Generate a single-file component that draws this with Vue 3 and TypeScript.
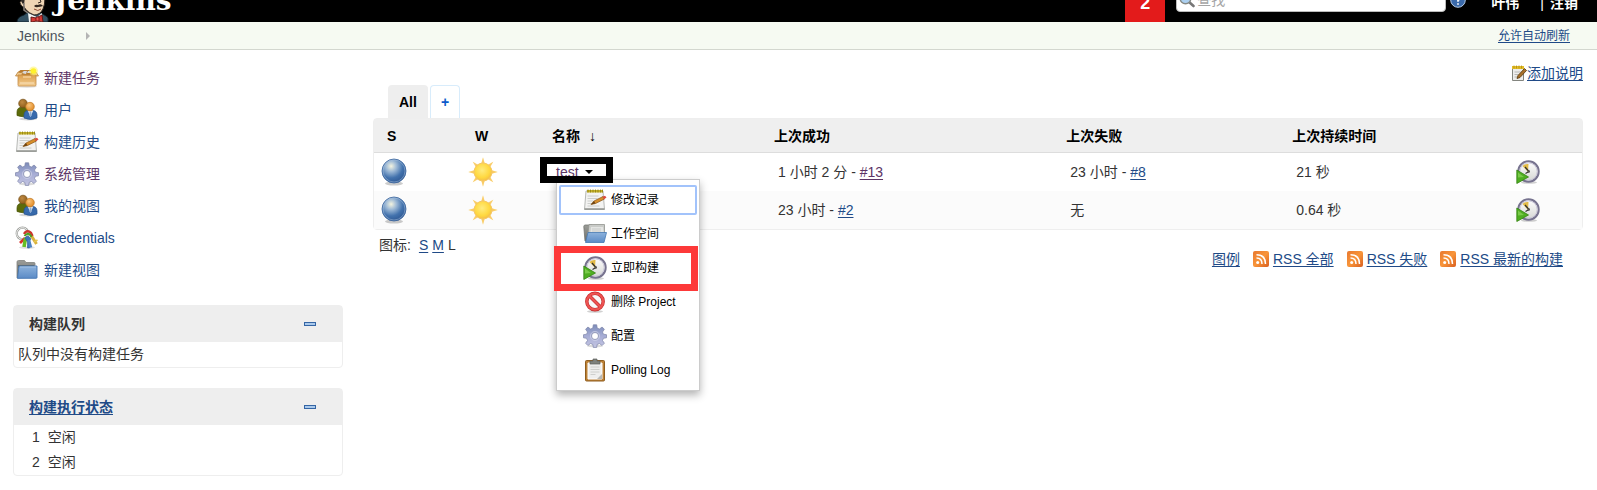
<script setup lang="ts">
import { ref } from 'vue'

interface Task { icon: string; label: string; visited?: boolean }
interface Build { age: string; id?: string; visited?: boolean }
interface Job { name: string; success: Build; failure: Build; duration: string; open?: boolean }

const query = ref('')

const tasks: Task[] = [
  { icon: 'package', label: '新建任务', visited: true },
  { icon: 'users', label: '用户' },
  { icon: 'notepad', label: '构建历史' },
  { icon: 'gear', label: '系统管理', visited: true },
  { icon: 'users', label: '我的视图' },
  { icon: 'keys', label: 'Credentials' },
  { icon: 'folder', label: '新建视图' },
]

const executors: string[] = ['空闲', '空闲']

const jobs: Job[] = [
  { name: 'test', success: { age: '1 小时 2 分', id: '#13', visited: true }, failure: { age: '23 小时', id: '#8' }, duration: '21 秒', open: true },
  { name: '', success: { age: '23 小时', id: '#2' }, failure: { age: '无' }, duration: '0.64 秒' },
]

const menu: Task[] = [
  { icon: 'notepad', label: '修改记录' },
  { icon: 'folder-open', label: '工作空间' },
  { icon: 'clock', label: '立即构建' },
  { icon: 'forbidden', label: '删除 Project' },
  { icon: 'gear', label: '配置' },
  { icon: 'clipboard', label: 'Polling Log' },
]

const feeds: string[] = ['RSS 全部', 'RSS 失败', 'RSS 最新的构建']
</script>

<template>
  <div class="page">
    <svg class="sprite" aria-hidden="true">
      <defs>
        <radialGradient id="gBall" cx=".38" cy=".3" r=".75">
          <stop offset="0" stop-color="#f4f4e0" /><stop offset=".3" stop-color="#9db9d6" />
          <stop offset=".65" stop-color="#4272ad" /><stop offset="1" stop-color="#2c5590" />
        </radialGradient>
        <radialGradient id="gSun" cx=".45" cy=".4" r=".6">
          <stop offset="0" stop-color="#ffec80" /><stop offset=".7" stop-color="#ffd83f" /><stop offset="1" stop-color="#f3bd4b" />
        </radialGradient>
        <linearGradient id="gGear" x1="0" y1="0" x2="0" y2="1">
          <stop offset="0" stop-color="#7d8dba" /><stop offset=".5" stop-color="#a7add5" /><stop offset="1" stop-color="#c4c5e2" />
        </linearGradient>
        <linearGradient id="gBlue" x1="0" y1="0" x2="0" y2="1">
          <stop offset="0" stop-color="#8db2dc" /><stop offset="1" stop-color="#5b8bc6" />
        </linearGradient>
        <linearGradient id="gGray" x1="0" y1="0" x2="0" y2="1">
          <stop offset="0" stop-color="#9b9c98" /><stop offset="1" stop-color="#6d6f6b" />
        </linearGradient>
        <linearGradient id="gBox" x1="0" y1="0" x2="0" y2="1">
          <stop offset="0" stop-color="#dc9f4c" /><stop offset="1" stop-color="#f3ce94" />
        </linearGradient>
        <linearGradient id="gRss" x1="0" y1="0" x2="1" y2="1">
          <stop offset="0" stop-color="#e8782f" /><stop offset=".5" stop-color="#f8953a" /><stop offset="1" stop-color="#d95f20" />
        </linearGradient>
        <radialGradient id="gBrown" cx=".4" cy=".35" r=".7">
          <stop offset="0" stop-color="#c08a43" /><stop offset="1" stop-color="#8a5a17" />
        </radialGradient>
        <radialGradient id="gOrange" cx=".4" cy=".35" r=".7">
          <stop offset="0" stop-color="#f9c57c" /><stop offset="1" stop-color="#df8620" />
        </radialGradient>
        <linearGradient id="gFace" x1="0" y1="0" x2="0" y2="1">
          <stop offset="0" stop-color="#fff" /><stop offset="1" stop-color="#d5d6d3" />
        </linearGradient>
      </defs>
      <symbol id="i-package" viewBox="0 0 24 24">
        <ellipse cx="12" cy="20.5" rx="10" ry="1.5" fill="#000" opacity=".1" />
        <path d="M3 6 5.500 4h13L21 6v4H3z" fill="#b87c30" />
        <path d="M6 7l3-2h3l-1 3zM12 7l1-2h3l1 2z" fill="#d8d9dc" />
        <path d="M3 6 0.500 10H6l2-3zM21 6l2.500 4H18l-2-3z" fill="#efc88b" stroke="#b57a32" stroke-width=".7" />
        <path d="M3 9h18v10q0 1-1 1H4q-1 0-1-1z" fill="url(#gBox)" stroke="#c48b44" stroke-width=".8" />
        <path d="M5 17h14" stroke="#fae3bd" /><path d="M8 11h8" stroke="#f4cf98" stroke-width="1.500" />
        <circle cx="18.500" cy="5" r="4.500" fill="#fff36a" opacity=".55" /><circle cx="18.500" cy="5" r="2.800" fill="#fff12c" />
      </symbol>
      <symbol id="i-users" viewBox="0 0 24 24">
        <ellipse cx="13" cy="21" rx="9" ry="1.500" fill="#000" opacity=".16" />
        <path d="M2 17.500V14q0-5 6-5t6 5v3.500q-6 2.500-12 0z" fill="#5c6b0a" stroke="#465204" stroke-width=".7" />
        <circle cx="8" cy="5.500" r="4.300" fill="url(#gBrown)" stroke="#765019" stroke-width=".7" />
        <path d="M9 20v-3q0-5 6.500-5t6.500 5v3q-6.500 3-13 0z" fill="#376aac" stroke="#28548f" stroke-width=".7" />
        <path d="M12.800 12.500h5.400L15.500 19z" fill="#edf2f7" /><path d="M14.700 13.500h1.600l.4 4-1.200 1.500-1.200-1.500z" fill="#8eacd0" />
        <circle cx="15" cy="8.600" r="4.300" fill="url(#gOrange)" stroke="#bf7824" stroke-width=".7" />
      </symbol>
      <symbol id="i-notepad" viewBox="0 0 24 24">
        <path d="M3 3h17l1.500 18.500H1.500z" fill="#f3f3f2" stroke="#a6a8a4" stroke-width=".8" />
        <path d="M1.500 21h20" stroke="#92948f" stroke-width="1.500" />
        <path d="M4 2h16v2.500H4z" fill="#c6b42c" /><path d="M5 1.500v3M7.500 1.500v3M10 1.500v3M12.500 1.500v3M15 1.500v3M17.500 1.500v3M19.500 1.500v3" stroke="#8d7b13" stroke-width=".8" />
        <path d="M4.500 8h11M4.500 10.500h10M4.500 13h6M4.500 15.500h5M4.500 18h12" stroke="#c2c4c1" stroke-width=".8" />
        <path d="M8 16.500l3-3.500 9-4.500 1.500 2.500-9 4.500z" fill="#d78e2b" stroke="#87571b" stroke-width=".7" />
        <path d="M8 16.500l3-3.500 1.500 2.500z" fill="#6d4415" /><path d="M19.500 8.800l2.500-1 1.500 1.700-2.500 1.700z" fill="#dc4a40" />
      </symbol>
      <symbol id="i-gear" viewBox="0 0 24 24">
        <ellipse cx="12" cy="22" rx="8" ry="1.500" fill="#000" opacity=".14" />
        <g fill="url(#gGear)" stroke="#7d84a8" stroke-width=".7">
          <path fill-rule="evenodd" d="M10.300.8h3.400l.5 3.300 2.200.9 2.700-2 2.300 2.300-1.900 2.700.9 2.200 3.100.5v3.100l-3.100.5-.9 2.200 1.900 2.700-2.300 2.300-2.700-2-2.200.9-.5 3h-3.400l-.5-3-2.200-.9-2.700 2-2.300-2.300 1.900-2.700-.9-2.200L.5 13.800v-3.100l3.100-.5.9-2.200-1.900-2.700L4.900 3l2.700 2 2.200-.9zM12 8.500a3.500 3.500 0 1 0 0 7 3.500 3.500 0 0 0 0-7z" />
        </g>
        <circle cx="12" cy="12" r="4.600" fill="none" stroke="#d5d8ec" stroke-width=".6" />
      </symbol>
      <symbol id="i-keys" viewBox="0 0 24 24">
        <ellipse cx="12" cy="21.500" rx="8" ry="1.300" fill="#000" opacity=".12" />
        <circle cx="7.500" cy="7.500" r="5.800" fill="none" stroke="#9c9e9a" stroke-width="2.200" /><circle cx="7.500" cy="7.500" r="5.800" fill="none" stroke="#f2f2f1" />
        <path d="M16.500 10l5 8" stroke="#d9b23c" stroke-width="3" /><path d="M19 16l3.500-2" stroke="#e7c64f" stroke-width="1.500" />
        <path d="M10 12l-5 5" stroke="#d93329" stroke-width="2.600" />
        <path d="M10.500 12l-1.500 9" stroke="#67bd23" stroke-width="3.600" />
        <path d="M9 8q3-5 7-1l1.500 3" fill="none" stroke="#cc372d" stroke-width="2.500" />
        <path d="M9.500 10q4-5 7 1" fill="none" stroke="#4da11f" stroke-width="2" />
        <path d="M10 12q3-4 6 1l-1.500 2v7h-2v-6z" fill="#3e75b8" stroke="#255797" stroke-width=".6" /><path d="M14 14l2 7.500" stroke="#4b82c4" stroke-width="2.500" />
      </symbol>
      <symbol id="i-folder" viewBox="0 0 24 24">
        <path d="M2 20V4q0-1.500 1.500-1.500h6L11 4.500h8q1 0 1 1V19z" fill="url(#gGray)" stroke="#80827e" stroke-width=".8" />
        <path d="M3 7h16v3H3z" fill="#666964" />
        <path d="M4 8H22v11.500q0 .8-.8.800H2.500z" fill="url(#gBlue)" stroke="#4577b3" stroke-width=".9" />
        <path d="M5 9h16" stroke="#a9c6e6" stroke-width=".8" />
      </symbol>
      <symbol id="i-folder-open" viewBox="0 0 24 24">
        <path d="M2 19 .800 4.500q0-1.500 1.500-1.500H9l1 2h10v13z" fill="url(#gGray)" stroke="#727470" stroke-width=".8" />
        <path d="M4.500 16 6 2.500h15.500V13z" fill="#c9cbc8" stroke="#92948f" stroke-width=".8" /><path d="M7 15l1-10h12l1 9z" fill="#e4e5e3" /><path d="M9 7h9M9 9h9" stroke="#bfc0bd" stroke-width=".7" />
        <path d="M5 10.500h18.500L21 20.500H2.500z" fill="url(#gBlue)" stroke="#4578b3" stroke-width=".8" />
      </symbol>
      <symbol id="i-clock" viewBox="0 0 24 24">
        <ellipse cx="13" cy="22.500" rx="8" ry="1.300" fill="#000" opacity=".18" />
        <circle cx="12.500" cy="11.500" r="10.200" fill="url(#gFace)" stroke="#77738f" stroke-width="2" />
        <circle cx="12.500" cy="11.500" r="8.700" fill="none" stroke="#c7c4d7" />
        <path d="M12 12L6.500 6Q9 3.500 12.500 4z" fill="#e3bb46" />
        <path d="M9 7l4 4.500M9.500 13.500l3.500-2" stroke="#31312f" stroke-width="1.200" /><circle cx="12.800" cy="11.500" r="1.200" fill="#55534d" />
        <path d="M.800 10v13.500L12.500 17z" fill="#4fae21" stroke="#338411" stroke-width=".8" /><path d="M2 12.500v5l6-.5z" fill="#8dd65c" opacity=".7" />
      </symbol>
      <symbol id="i-forbidden" viewBox="0 0 24 24">
        <ellipse cx="12" cy="21.500" rx="8" ry="1.300" fill="#000" opacity=".18" />
        <circle cx="12" cy="11.500" r="8.200" fill="#f8f8f8" stroke="#c32a2b" stroke-width="3.400" /><path d="M6.500 6l11 11" stroke="#c32a2b" stroke-width="3.400" />
        <circle cx="12" cy="11.500" r="8.200" fill="none" stroke="#ed5352" stroke-width="2.200" /><path d="M6.500 6l11 11" stroke="#ed5352" stroke-width="2.200" />
      </symbol>
      <symbol id="i-clipboard" viewBox="0 0 24 24">
        <rect x="2.500" y="2.500" width="19" height="20.500" rx="1" fill="#bc8136" stroke="#8f5d1e" />
        <path d="M5 5h14v16H5z" fill="#eeeeed" stroke="#fff" /><path d="M7.500 9h9M7.500 11.500h9M7.500 14h9M7.500 16.500h5" stroke="#c5c6c4" stroke-width=".8" />
        <path d="M14 21l5-5v5z" fill="#b7b8b6" /><path d="M7 3h3V1h4v2h3v3H7z" fill="#7f827d" stroke="#5d605b" stroke-width=".7" />
      </symbol>
      <symbol id="i-ball" viewBox="0 0 26 28">
        <ellipse cx="13" cy="25.500" rx="9" ry="2" fill="#000" opacity=".2" />
        <circle cx="13" cy="13" r="12" fill="url(#gBall)" stroke="#3c669d" stroke-width=".8" /><circle cx="13" cy="13" r="11" fill="none" stroke="#a9c2de" stroke-width=".7" opacity=".7" />
      </symbol>
      <symbol id="i-sun" viewBox="0 0 30 30">
        <path d="M15 0l2 7h-4zM15 30l2-7h-4zM0 15l7-2v4zM30 15l-7-2v4zM4.500 4.500l6.500 3.500-3 3zM25.500 4.500L22 11l-3-3zM4.500 25.500L8 19l3 3zM25.500 25.500L19 22l3-3z" fill="#fde6a0" opacity=".55" />
        <path d="M15 .5l1.700 6h-3.400zM15 29.500l1.700-6h-3.400zM.5 15l6-1.700v3.400zM29.500 15l-6-1.700v3.400zM4.800 4.800l5.700 3.400-2.300 2.300zM25.200 4.800l-3.400 5.700-2.300-2.300zM4.800 25.200l3.400-5.700 2.300 2.300zM25.200 25.200l-5.700-3.400 2.300-2.300z" fill="#f9cc68" />
        <circle cx="15" cy="15" r="9" fill="url(#gSun)" stroke="#f5c765" />
      </symbol>
      <symbol id="i-rss" viewBox="0 0 16 16">
        <rect width="16" height="16" rx="2" fill="url(#gRss)" />
        <circle cx="4.700" cy="11.500" r="1.500" fill="#fff" /><path d="M3.500 7q5.500 0 5.500 6M3.500 3.700q9 0 9 9.300" fill="none" stroke="#fff" stroke-width="1.500" />
      </symbol>
      <symbol id="i-edit" viewBox="0 0 16 16">
        <path d="M1.500 2.500h11v13h-11z" fill="#ededec" stroke="#83857f" /><path d="M1 1h12v3H1z" fill="#e4be29" /><path d="M3 .5v3M5.500.5v3M8 .5v3M10.500.5v3" stroke="#a88410" stroke-width=".7" />
        <path d="M3.500 7h6M3.500 9.500h4M3.500 12h3" stroke="#aaa" stroke-width=".8" /><path d="M6 13.500l1-3 6.500-7 2 2-6.500 7z" fill="#a9712a" stroke="#573609" stroke-width=".8" />
      </symbol>
      <symbol id="i-mag" viewBox="0 0 16 16">
        <path d="M9.500 9.500l5 4.500" stroke="#777" stroke-width="2.600" stroke-linecap="round" /><circle cx="6.500" cy="6.500" r="5.300" fill="#acd0f0" stroke="#858985" stroke-width="1.400" /><path d="M4 8q0-4 4-4" stroke="#e9f4ff" fill="none" stroke-width="1.500" />
      </symbol>
      <symbol id="i-help" viewBox="0 0 16 16">
        <circle cx="8" cy="8" r="7.300" fill="#3b6aaa" stroke="#b4cae5" /><path d="M5.700 6q0-2.500 2.500-2.500 2.200 0 2.200 2Q10.400 7 8 8.300v1.500M8 11.200v1.600" fill="none" stroke="#fff" stroke-width="1.700" />
      </symbol>
      <symbol id="i-butler" viewBox="0 0 34 44">
        <path d="M1 44q0-5 7-7l4-3 13 1 5 3q3 1 2 6z" fill="#335061" stroke="#0c1a22" stroke-width=".8" />
        <path d="M12 35l9 4 5-4v9H13z" fill="#f4f4f2" />
        <path d="M6 22Q3 7 16 5q14-1 13 14 0 8-2 12-3 6-9 6Q7 33 6 22z" fill="#efd5b5" stroke="#30251d" />
        <path d="M5 24Q1 4 16 3q10-1 13 8-8-5-15 0-2 7-5 8l-1 8q-2 0-3-3z" fill="#2f2925" />
        <path d="M5 23q-2 1 0 4t3 1" fill="#efd5b5" stroke="#30251d" stroke-width=".8" />
        <path d="M8 25v7l4 3" fill="none" stroke="#8e857e" stroke-width="1.500" />
        <path d="M17 18h3M24 18h3M23 19l2 5-3 1" stroke="#30251d" fill="none" />
        <path d="M18 28q2-2 4-1 3-2 5 1-3 1-5 1-2 1-4-1z" fill="#33271f" /><path d="M18 31q4 3 7 0" stroke="#8c4630" fill="none" />
        <path d="M15 39l5 1 6-3 1 7-6-1-6 1z" fill="#d33833" stroke="#5c1210" stroke-width=".9" /><path d="M20 39h3v4h-3z" fill="#ef4d48" stroke="#5c1210" stroke-width=".7" />
      </symbol>
    </svg>

    <header class="top">
      <div class="top-inner">
        <a href="#" class="brand"><svg class="butler"><use href="#i-butler" /></svg><span>Jenkins</span></a>
        <a href="#" class="alerts">2</a>
        <form class="search" @submit.prevent>
          <svg class="ic16"><use href="#i-mag" /></svg>
          <input v-model="query" type="text" placeholder="查找" aria-label="查找">
        </form>
        <a href="#" class="help" aria-label="?"><svg class="ic16"><use href="#i-help" /></svg></a>
        <nav class="login"><a href="#">叶伟</a><span class="bar">|</span><a href="#">注销</a></nav>
      </div>
    </header>

    <nav class="crumbs">
      <a href="#" class="crumb">Jenkins</a><span class="crumb-arrow"></span>
      <a href="#" class="refresh">允许自动刷新</a>
    </nav>

    <div class="body">
      <aside class="side">
        <nav class="tasks">
          <a v-for="t in tasks" :key="t.label" href="#" class="task" :class="{ visited: t.visited }">
            <svg class="ic24"><use :href="'#i-' + t.icon" /></svg><span>{{ t.label }}</span>
          </a>
        </nav>
        <section class="pane">
          <h2 class="pane-head"><span>构建队列</span><button type="button" class="collapse" aria-label="collapse"></button></h2>
          <p class="pane-empty">队列中没有构建任务</p>
        </section>
        <section class="pane">
          <h2 class="pane-head"><a href="#">构建执行状态</a><button type="button" class="collapse" aria-label="collapse"></button></h2>
          <table class="executors">
            <tbody><tr v-for="(state, i) in executors" :key="i"><td class="num">{{ i + 1 }}</td><td>{{ state }}</td></tr></tbody>
          </table>
        </section>
      </aside>

      <main class="main">
        <div class="describe"><a href="#"><svg class="ic16"><use href="#i-edit" /></svg><span class="u">添加说明</span></a></div>
        <nav class="tabs"><a href="#" class="tab active">All</a><a href="#" class="tab add">+</a></nav>
        <table class="jobs">
          <colgroup><col class="c-s"><col class="c-w"><col class="c-name"><col class="c-ok"><col class="c-bad"><col class="c-time"><col class="c-run"></colgroup>
          <thead>
            <tr><th>S</th><th>W</th><th>名称<span class="sort">↓</span></th><th>上次成功</th><th>上次失败</th><th>上次持续时间</th><th></th></tr>
          </thead>
          <tbody>
            <tr v-for="(job, i) in jobs" :key="i">
              <td class="status"><svg class="ball"><use href="#i-ball" /></svg></td>
              <td class="weather"><svg class="sun"><use href="#i-sun" /></svg></td>
              <td>
                <div v-if="job.open" class="job-link">
                  <a href="#" class="visited">{{ job.name }}</a><button type="button" class="caret" aria-label="menu"></button>
                  <div class="menu">
                    <a v-for="(m, k) in menu" :key="m.label" href="#" class="menu-item" :class="{ focused: k === 0, marked: k === 2 }">
                      <svg class="ic24"><use :href="'#i-' + m.icon" /></svg><span>{{ m.label }}</span>
                    </a>
                  </div>
                  <span class="outline"></span>
                </div>
              </td>
              <td>{{ job.success.age }} - <a href="#" class="u" :class="{ visited: job.success.visited }">{{ job.success.id }}</a></td>
              <td>{{ job.failure.age }}<template v-if="job.failure.id"> - <a href="#" class="u">{{ job.failure.id }}</a></template></td>
              <td>{{ job.duration }}</td>
              <td class="run"><button type="button" class="run-btn" aria-label="立即构建"><svg class="ic24"><use href="#i-clock" /></svg></button></td>
            </tr>
          </tbody>
        </table>
        <footer class="legend">
          <div class="sizes"><span class="sizes-label">图标:</span><a href="#" class="u">S</a><a href="#" class="u">M</a><span>L</span></div>
          <div class="feeds">
            <a href="#" class="u">图例</a>
            <a v-for="f in feeds" :key="f" href="#" class="feed"><svg class="ic16"><use href="#i-rss" /></svg><span class="u">{{ f }}</span></a>
          </div>
        </footer>
      </main>
    </div>
  </div>
</template>

<style>
body { margin: 0; background: #fff; }
</style>

<style scoped>
.page { font: 14px/20px "Liberation Sans", "Noto Sans CJK SC", sans-serif; color: #333; }
.page * { box-sizing: border-box; }
.sprite { position: absolute; width: 0; height: 0; }
svg { display: block; flex: none; }
a { color: #204a87; text-decoration: none; }
a.visited { color: #5c3566; }
.u { text-decoration: underline; text-underline-offset: 2px; }
.ic16 { width: 16px; height: 16px; }
.ic24 { width: 24px; height: 24px; }
button { border: 0; padding: 0; background: none; }

.top { height: 22px; background: #000; overflow: hidden; display: flex; align-items: flex-end; }
.top-inner { flex: 1; height: 44px; display: flex; align-items: center; padding: 0 19px 0 16px; }
.brand { display: flex; align-items: center; gap: 4px; margin-right: auto; color: #fff; font: bold 28px/40px "DejaVu Serif", serif; }
.brand span { padding-top: 2px; }
.butler { width: 34px; height: 44px; }
.alerts { width: 40px; height: 44px; background: #e31b1b; color: #fff; font-weight: bold; font-size: 18px; line-height: 50px; text-align: center; }
.search { display: flex; align-items: center; width: 270px; height: 24px; margin-left: 11px; padding: 0 4px 0 2px; background: #fff; border: 1px solid #bbb; border-radius: 4px; gap: 2px; }
.search input { flex: 1; min-width: 0; height: 22px; border: 0; padding: 0; outline: 0; background: none; font: inherit; }
.search input::placeholder { color: #a5a5a5; }
.help { margin-left: 4px; }
.login { display: flex; margin-left: 25px; padding-top: 6px; font-weight: bold; }
.login a, .bar { color: #fff; }
.bar { margin: 0 6px 0 21px; font-weight: normal; }

.crumbs { display: flex; align-items: center; height: 28px; padding: 0 27px 0 17px; background: #f6faf2; border-bottom: 1px solid #d3d7cf; }
.crumb { color: #4d545d; }
.crumb-arrow { margin-left: 22px; border: 4px solid transparent; border-left-color: #b4b4b4; border-right: 0; }
.refresh { margin-left: auto; font-size: 12px; text-decoration: underline; text-underline-offset: 2px; }

.body { display: flex; gap: 30px; padding: 12px 14px 0 13px; }
.side { flex: 0 0 330px; }
.tasks { margin-bottom: 19px; }
.task { display: flex; align-items: center; height: 32px; padding-left: 2px; gap: 5px; }
.pane { margin-bottom: 20px; border: 1px solid #eee; border-radius: 4px; }
.pane-head { display: flex; align-items: center; justify-content: space-between; height: 36px; margin: 0; padding: 0 26px 0 15px; background: #eee; font-size: 14px; line-height: 20px; }
.pane-head a { text-decoration: underline; text-underline-offset: 2px; }
.collapse { width: 12px; height: 4px; border: 1px solid #3465a4; background: #a9c9ec; }
.pane-empty { margin: 0; padding: 2px 4px 3px; }
.executors { border-collapse: collapse; }
.executors td { height: 25px; padding: 0 4px 1px; }
.executors .num { width: 29px; padding-left: 18px; }

.main { flex: 1; min-width: 0; }
.describe { display: flex; justify-content: flex-end; align-items: flex-start; height: 23px; padding-top: 1px; }
.describe a { display: flex; align-items: center; }
.tabs { display: flex; gap: 2px; padding-left: 15px; }
.tab { height: 33px; padding: 0 10px; border: 1px solid #eee; border-bottom: 0; border-radius: 4px 4px 0 0; font-weight: bold; line-height: 32px; }
.tab.active { background: #eee; color: #000; }
.tab.add { border-color: #d8ecfb; color: #0b5bcb; }
.jobs { width: 100%; table-layout: fixed; border-collapse: separate; border-spacing: 0; border: 1px solid #eee; border-radius: 4px; }
.c-s { width: 88px; }
.c-w { width: 77px; }
.c-name { width: 222px; }
.c-ok { width: 24.2%; }
.c-bad { width: 18.7%; }
.c-run { width: 77px; }
.jobs th { height: 34px; padding: 0 0 0 13px; background: #efefef; border-bottom: 1px solid #ddd; color: #000; text-align: left; }
.jobs td { height: 38px; padding: 0 0 0 17px; }
.jobs tbody tr:nth-child(even) td { background: #fbfbfb; }
.jobs td.status { padding-left: 7px; }
.jobs td.weather { padding-left: 6px; }
.jobs td.run { padding-left: 11px; }
.ball { width: 26px; height: 28px; }
.sun { width: 30px; height: 30px; }
.sort { margin-left: 9px; font-weight: normal; }
.run-btn { display: block; }
.job-link { position: relative; display: inline-flex; align-items: center; gap: 6px; }
.caret { border: 4px solid transparent; border-top-color: #000; border-bottom: 0; }
.outline { position: absolute; z-index: 3; left: -16px; top: -5px; width: 73px; height: 26px; border: 7px solid #000; pointer-events: none; }
.menu { position: absolute; z-index: 2; top: 17px; left: 0; width: 144px; padding: 3px 2px; background: #fff; border: 1px solid #ccc; box-shadow: 0 4px 8px rgba(0, 0, 0, .3); font-size: 12px; }
.menu-item { position: relative; display: flex; align-items: center; gap: 4px; height: 34px; padding-left: 24px; color: #000; white-space: nowrap; }
.menu-item.focused::before { content: ""; position: absolute; inset: 2px 0; border: 2px solid #a2c3fb; border-radius: 2px; }
.menu-item.marked::after { content: ""; position: absolute; inset: -5px -1px -6px -5px; border: 7px solid #fd3939; }

.legend { display: flex; justify-content: space-between; padding: 5px 20px 0 6px; }
.sizes { display: flex; gap: 4px; }
.sizes-label { margin-right: 4px; }
.feeds { display: flex; gap: 13px; padding-top: 14px; }
.feed { display: flex; align-items: center; gap: 4px; }
</style>
